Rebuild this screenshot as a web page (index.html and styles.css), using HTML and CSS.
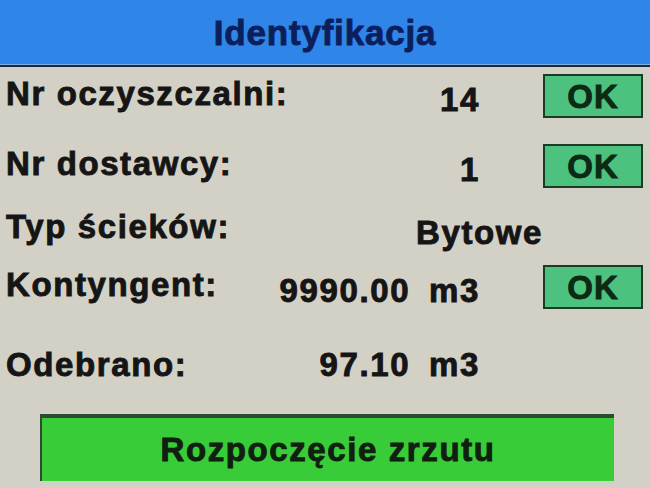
FILE: index.html
```html
<!DOCTYPE html>
<html lang="pl">
<head>
<meta charset="utf-8">
<title>Identyfikacja</title>
<link rel="stylesheet" href="styles.css">
</head>
<body>
<div class="screen">
  <header class="header">
    <h1 class="title">Identyfikacja</h1>
  </header>
  <main class="panel">
    <div class="row row--first">
      <span class="label">Nr oczyszczalni:</span>
      <span class="value">14</span>
      <span class="ok">OK</span>
    </div>
    <div class="row row--second">
      <span class="label">Nr dostawcy:</span>
      <span class="value">1</span>
      <span class="ok">OK</span>
    </div>
    <div class="row row--third">
      <span class="label">Typ ścieków:</span>
      <span class="value value--wide">Bytowe</span>
      <span class="spacer"></span>
    </div>
    <div class="row row--fourth">
      <span class="label">Kontyngent:</span>
      <span class="value">9990.00<span class="unit">m3</span></span>
      <span class="ok">OK</span>
    </div>
    <div class="row row--fifth">
      <span class="label label--flat">Odebrano:</span>
      <span class="value value--flat">97.10<span class="unit">m3</span></span>
      <span class="spacer"></span>
    </div>
    <button class="start" type="button">Rozpoczęcie zrzutu</button>
  </main>
</div>
</body>
</html>
```

FILE: styles.css
```css
html, body {
  margin: 0;
  padding: 0;
}
body {
  width: 650px;
  height: 488px;
  overflow: hidden;
  background: #d3d1c5;
  font-family: "Liberation Sans", Arial, sans-serif;
  font-weight: bold;
  color: #151515;
}
.screen {
  display: flex;
  flex-direction: column;
  height: 488px;
}
.header {
  height: 64px;
  background: #2f86e8;
  border-bottom: 1px solid #7fb0e0;
  box-shadow: 0 2px 0 #1b2838;
  display: flex;
  align-items: center;
  justify-content: center;
}
.title {
  margin: 0;
  font-size: 35px;
  line-height: 1;
  letter-spacing: 0.8px;
  color: #0c1f5c;
  font-weight: bold;
  -webkit-text-stroke: 0.9px #0c1f5c;
}
.panel {
  display: flex;
  flex-direction: column;
  padding: 9px 7px 0 6px;
}
.row {
  display: grid;
  grid-template-columns: minmax(0, 1fr) auto 100px;
  column-gap: 63px;
  align-items: center;
  height: 44px;
  font-size: 33px;
  line-height: 1;
  letter-spacing: 1.6px;
  -webkit-text-stroke: 0.9px #151515;
}
.row--second { margin-top: 26px; }
.row--third { margin-top: 19px; }
.row--fourth { margin-top: 14px; }
.row--fifth { margin-top: 33px; }
.label {
  margin-bottom: 5px;
  white-space: nowrap;
}
.value {
  margin-top: 6px;
  text-align: right;
  white-space: nowrap;
}
.label--flat, .value--flat {
  margin: 0;
}
.value--wide {
  margin-right: -63px;
}
.unit {
  margin-left: 19px;
}
.ok {
  box-sizing: border-box;
  height: 44px;
  border: 2px solid #1d3a26;
  background: #4dc27f;
  color: #0d2a14;
  -webkit-text-stroke: 0.9px #0d2a14;
  display: flex;
  align-items: center;
  justify-content: center;
  letter-spacing: 1px;
}
.start {
  box-sizing: border-box;
  margin: 28px 0 0 34px;
  width: 574px;
  height: 67px;
  padding: 0;
  border: none;
  border-top: 4px solid #2c4a30;
  border-left: 2px solid #2c4a30;
  background: #39cc39;
  color: #10200f;
  -webkit-text-stroke: 0.9px #10200f;
  font-family: "Liberation Sans", Arial, sans-serif;
  font-weight: bold;
  font-size: 33px;
  line-height: 1;
  letter-spacing: 1.6px;
}
```
